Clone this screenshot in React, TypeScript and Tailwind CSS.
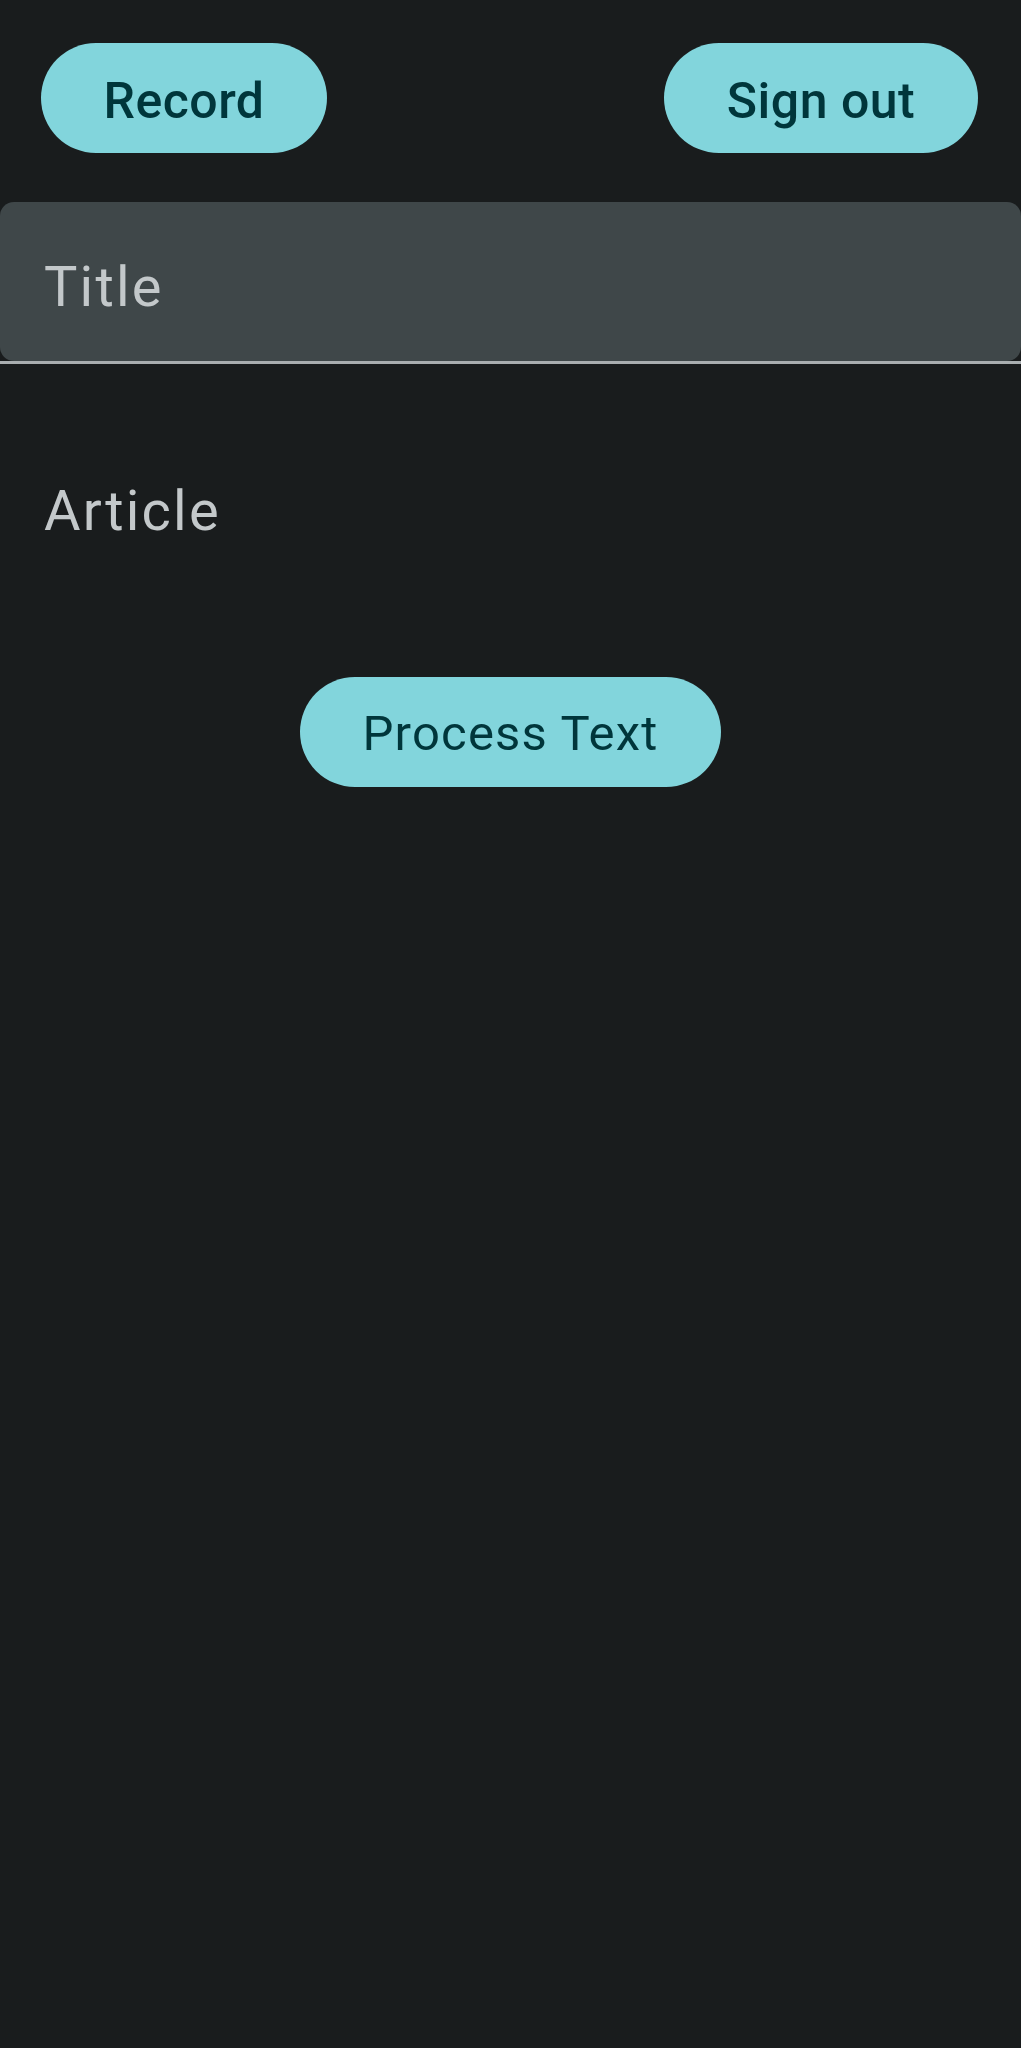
export default function App() {
  return (
    <div className="min-h-[2048px] w-full bg-[#191c1d] font-['Roboto',sans-serif]">
      <header className="flex items-center justify-between pl-[41px] pr-[43px] pt-[43px]">
        <button className="flex h-[110px] w-[286px] items-center justify-center rounded-full bg-[#82d5dc] pt-[6px] text-[50px] font-medium tracking-[0.5px] text-[#00363b]">
          Record
        </button>
        <button className="flex h-[110px] w-[314px] items-center justify-center rounded-full bg-[#82d5dc] pt-[6px] text-[50px] font-medium tracking-[0.5px] text-[#00363b]">
          Sign out
        </button>
      </header>

      <div className="mt-[49px]">
        <div className="h-[159px] rounded-[14px] bg-[#3f4749] px-[44px] pt-[52px] text-[56px] leading-[66px] tracking-[2.2px] text-[#c3c8ca]">
          Title
        </div>
        <div className="h-[3px] bg-[#a9aeb0]" />
      </div>

      <div className="px-[44px] pt-[114px] text-[56px] leading-[66px] tracking-[2.2px] text-[#c3c8ca]">
        Article
      </div>

      <div className="flex justify-center pt-[133px]">
        <button className="flex h-[110px] w-[421px] items-center justify-center rounded-full bg-[#82d5dc] pt-[4px] text-[49px] tracking-[1.2px] text-[#00363b]">
          Process Text
        </button>
      </div>
    </div>
  );
}
